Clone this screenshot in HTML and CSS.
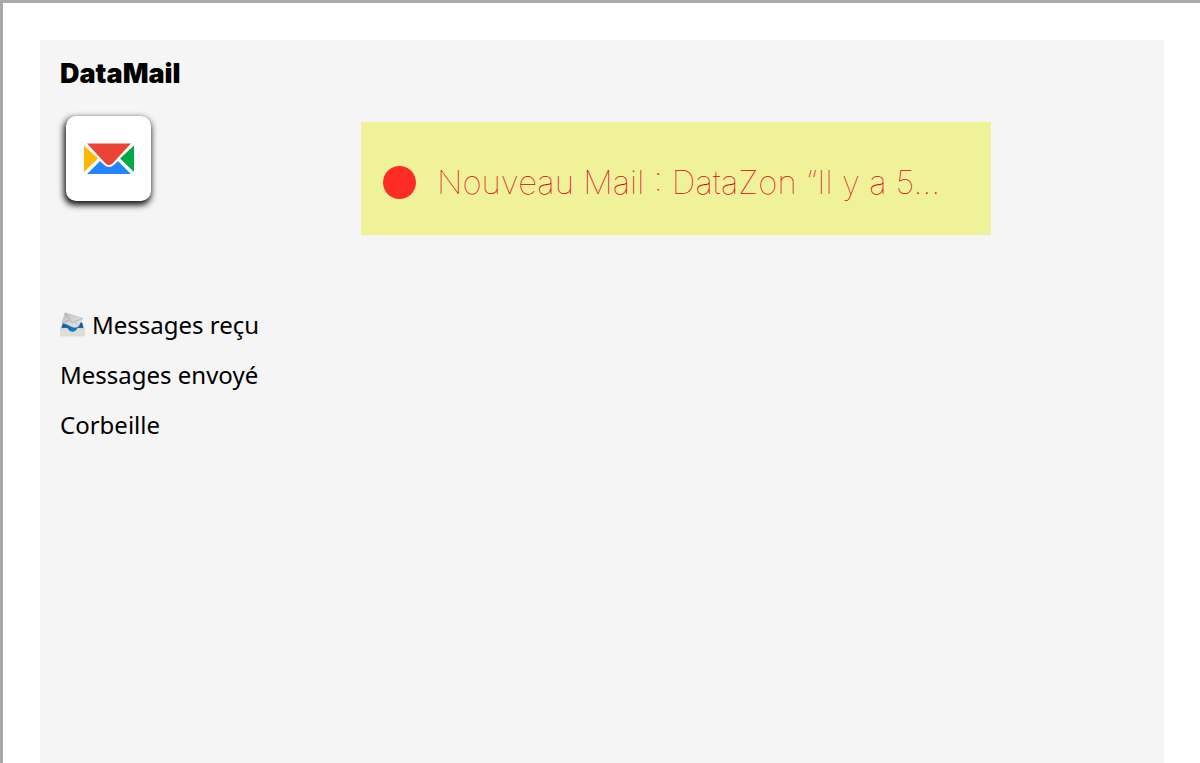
FILE: index.html
```html
<!DOCTYPE html>
<html lang="fr">
<head>
<meta charset="utf-8">
<meta name="viewport" content="width=device-width, initial-scale=1">
<title>DataMail</title>
<link rel="stylesheet" href="styles.css">
</head>
<body>
<div class="panel">
  <aside class="sidebar">
    <h1 class="brand">DataMail</h1>
    <div class="logo">
      <svg class="logo-mark" viewBox="0 0 50 32" aria-hidden="true">
        <path fill="#e94436" d="M3 0.5H47L28.5 20.5Q25 24 21.5 20.5Z"/>
        <path fill="#fdb900" d="M0 2.5L14 15.5L0 29Z"/>
        <path fill="#00ab47" d="M50 2.5L36 15.5L50 29Z"/>
        <path fill="#2684fc" d="M3 31L16 18L20 21.7Q25 26.5 30 21.7L34 18L47 31Z"/>
      </svg>
    </div>
    <nav class="nav">
      <a class="nav-link" href="#recus">
        <svg class="tray" viewBox="0 0 25 27" aria-hidden="true">
          <defs>
            <linearGradient id="paper" x1="0" y1="0" x2="1" y2="1"><stop offset="0" stop-color="#b9bcbd"/><stop offset="1" stop-color="#eceeee"/></linearGradient>
            <linearGradient id="well" x1="0" y1="0" x2="0" y2="1"><stop offset="0" stop-color="#174c78"/><stop offset="1" stop-color="#0d8be0"/></linearGradient>
          </defs>
          <path fill="#c9cac6" d="M2.5 11H22.5L25 17H0Z"/>
          <path fill="url(#well)" d="M3 10.5H22L23.5 16.3H17.5Q16 20 12.5 20T7.5 16.3H1.5Z"/>
          <path fill="url(#paper)" stroke="#b4b8ba" stroke-width=".5" d="M5 0.8L22.8 6.2L18.5 14.5Q15 16.5 11 14.5Q7 12 2 11Z"/>
          <path fill="none" stroke="#a0a5a8" stroke-width=".7" d="M5 1L12 10.7L22.5 6.5M2.2 11L9.5 8M18.3 14L14.5 9.8"/>
          <path fill="#deddd7" d="M0 16.3H7.5Q9 20 12.5 20T17.5 16.3H25V23.5Q25 24.5 24 24.5H1Q0 24.5 0 23.5Z"/>
        </svg>
        <span>Messages reçu</span>
      </a>
      <a class="nav-link" href="#envoyes">Messages envoyé</a>
      <a class="nav-link" href="#corbeille">Corbeille</a>
    </nav>
  </aside>
  <main class="content">
    <a class="notice" href="#nouveau">
      <span class="dot"></span>
      <span class="notice-text">Nouveau Mail : DataZon “Il y a 5…</span>
    </a>
  </main>
</div>
</body>
</html>
```
FILE: styles.css
```css
* { box-sizing: border-box; }
body {
  margin: 0;
  min-height: 100vh;
  padding: 37px 36px 0 37px;
  border-top: 3px solid #a9a9a9;
  border-left: 3px solid #a9a9a9;
  background: #fff;
  color: #000;
  font-family: "Noto Sans", "Open Sans", sans-serif;
}
.panel {
  display: flex;
  min-height: calc(100vh - 40px);
  padding: 16px 20px 0;
  background: #f5f5f5;
}
.sidebar { flex: 0 0 301px; }
.brand {
  margin: 0;
  font: 900 27px/36px Inter, sans-serif;
}
.logo {
  display: flex;
  align-items: center;
  justify-content: center;
  width: 85px;
  height: 85px;
  margin: 24px 0 0 6px;
  border-radius: 10px;
  background: #fff;
  box-shadow: -1px 3px 6px 1px #111;
}
.logo-mark { width: 50px; height: 32px; }
.nav {
  display: flex;
  flex-direction: column;
  margin-top: 99px;
}
.nav-link {
  display: flex;
  align-items: center;
  gap: 7px;
  color: inherit;
  font-size: 24px;
  line-height: 50px;
  text-decoration: none;
}
.tray { width: 25px; height: 27px; }
.content {
  flex: 1;
  min-width: 0;
  padding-top: 66px;
}
.notice {
  display: flex;
  align-items: center;
  gap: 21px;
  max-width: 630px;
  padding: 36px 22px 28px;
  background: #f0f29a;
  color: #d90019;
  text-decoration: none;
}
.dot {
  flex: none;
  width: 33px;
  height: 33px;
  border-radius: 50%;
  background: #ff2b25;
}
.notice-text {
  overflow: hidden;
  font: 100 33px/49px Inter, sans-serif;
  text-overflow: ellipsis;
  white-space: nowrap;
}
```
